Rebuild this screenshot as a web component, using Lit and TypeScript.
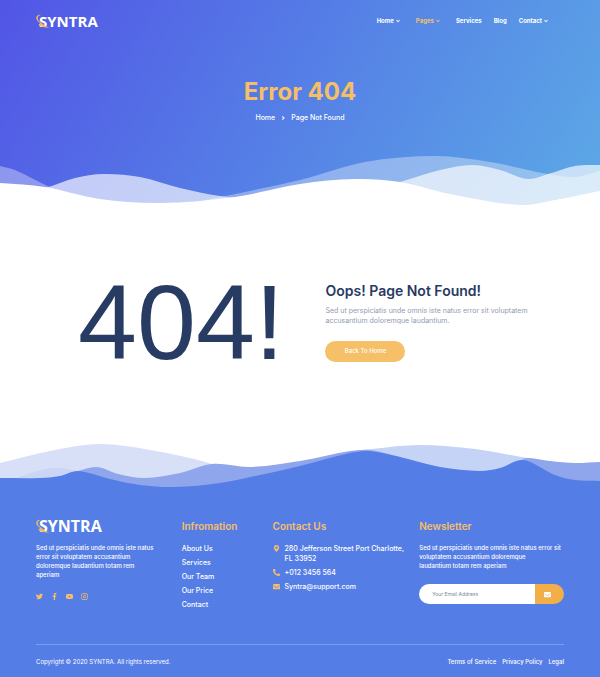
import { LitElement, html, css, svg, nothing } from "lit";
import { customElement, property } from "lit/decorators.js";

type Point = [number, number];

/** Smooth curve through the points, closed down to the given base line. */
function wave(points: Point[], base: number): string {
  let d = `M${points[0][0]},${base} L${points[0][0]},${points[0][1]}`;
  for (let i = 0; i < points.length - 1; i++) {
    const p0 = points[Math.max(0, i - 1)];
    const p1 = points[i];
    const p2 = points[i + 1];
    const p3 = points[Math.min(points.length - 1, i + 2)];
    const k1 = (p2[1] - p0[1]) / Math.max(1, p2[0] - p0[0]);
    const k2 = (p3[1] - p1[1]) / Math.max(1, p3[0] - p1[0]);
    const dx = (p2[0] - p1[0]) / 3;
    d += ` C${p1[0] + dx},${p1[1] + k1 * dx} ${p2[0] - dx},${p2[1] - k2 * dx} ${p2[0]},${p2[1]}`;
  }
  return `${d} L${points[points.length - 1][0]},${base} Z`;
}

const ICONS: Record<string, string> = {
  twitter:
    "M459 152c0 5 0 9 0 14 0 138-106 298-299 298-59 0-115-17-161-47 8 1 16 1 25 1 49 0 94-17 130-45-46-1-85-31-98-73 7 1 13 2 20 2 9 0 19-2 28-4-48-10-84-52-84-103v-1c14 8 30 13 47 13C39 188 20 156 20 120c0-19 5-37 14-53 52 64 129 105 216 110-2-8-3-16-3-24 0-58 47-105 105-105 30 0 57 13 77 33 24-5 46-13 66-25-8 24-24 45-46 58 21-2 42-8 60-16-14 21-31 39-50 54z",
  facebook:
    "M375 288l14-93h-89v-60c0-25 12-50 52-50h41V7s-37-7-72-7c-73 0-121 44-121 125v70h-81v93h81v224h100V288z",
  youtube:
    "M500 134c-6-24-24-42-47-48C412 75 256 75 256 75S100 75 59 86c-23 6-41 24-47 48C1 175 1 256 1 256s0 81 11 122c6 24 24 41 47 47 41 11 197 11 197 11s156 0 197-11c23-6 41-23 47-47 11-41 11-122 11-122s0-81-11-122zM205 330V182l130 74z",
  instagram:
    "M150 20h212c72 0 130 58 130 130v212c0 72-58 130-130 130H150C78 492 20 434 20 362V150C20 78 78 20 150 20zm0 46c-46 0-84 38-84 84v212c0 46 38 84 84 84h212c46 0 84-38 84-84V150c0-46-38-84-84-84zM256 135a121 121 0 1 1 0 242 121 121 0 0 1 0-242zm0 43a78 78 0 1 0 0 156 78 78 0 0 0 0-156zM382 102a28 28 0 1 1 0 56 28 28 0 0 1 0-56z",
  pin: "M236 502C91 291 64 270 64 192a192 192 0 1 1 384 0c0 78-27 99-172 310-10 13-30 13-40 0zM256 272a80 80 0 1 0 0-160 80 80 0 0 0 0 160z",
  phone:
    "M19 25L123 1c11-3 23 3 27 14l48 112c4 10 1 21-7 28l-61 50c36 77 99 140 177 177l50-61c7-8 18-11 28-7l112 48c11 4 17 16 14 27l-24 104c-3 11-12 19-24 19C207 512 0 305 0 49 0 37 8 28 19 25z",
  mail: "M502 191c4-3 10 0 10 5v204c0 27-21 48-48 48H48c-27 0-48-21-48-48V196c0-5 6-8 10-5 22 17 52 40 154 114 21 15 57 48 92 48 35 0 72-33 92-48 102-74 132-97 154-114zM256 320c23 0 57-29 73-41 133-97 143-105 174-129 6-5 9-12 9-19v-19c0-27-21-48-48-48H48c-27 0-48 21-48 48v19c0 7 3 14 9 19 31 24 41 32 174 129 16 12 50 41 73 41z",
  down: "M46 196l50-50 160 150 160-150 50 50-210 200z",
  right: "M156 86l60-56 210 226-210 226-60-56 160-170z",
};

@customElement("app-icon")
export class AppIcon extends LitElement {
  @property() name = "mail";

  static styles = css`
    :host {
      display: inline-flex;
      width: 7px;
      height: 7px;
      flex: none;
    }
    svg {
      width: 100%;
      height: 100%;
      fill: currentColor;
    }
  `;

  render() {
    return html`<svg viewBox="0 0 512 512" aria-hidden="true">
      ${svg`<path fill-rule="evenodd" d=${ICONS[this.name]} stroke="currentColor" stroke-width=${
        this.name === "down" || this.name === "right" ? 70 : 0
      }></path>`}
    </svg>`;
  }
}

@customElement("syntra-logo")
export class SyntraLogo extends LitElement {
  static styles = css`
    :host {
      display: block;
    }
    .logo {
      display: flex;
      align-items: center;
      color: #fff;
      text-decoration: none;
      font: 700 var(--logo-size, 15px) / 16px "Open Sans", sans-serif;
    }
    .mark {
      position: relative;
      z-index: 1;
      width: 14px;
      height: 14px;
      margin-right: -11px;
    }
  `;

  render() {
    return html`<a class="logo" href="#" aria-label="Syntra home">
      <svg class="mark" viewBox="0 0 14 14" aria-hidden="true">
        <path
          fill="#f5b95c"
          d="M5 .8C2.300 .3 0 1.800 .2 4.200 .5 6.500 2.500 7.900 4.300 9 3.700 9.600 2.800 10 2.500 10.500 4 13 9 13.600 14 13.600 11 12.700 9.200 12 7.800 10.700 6.300 9.200 2.600 7.600 1.900 5.200 1.300 3 2.800 1.400 5 .8z"
        ></path>
      </svg>
      <span>SYNTRA</span>
    </a>`;
  }
}

const HERO_BACK: Point[] = [[0, 21], [15, 25], [50, 42], [100, 60], [170, 62], [215, 53], [300, 35], [365, 17], [435, 11], [490, 17], [548, 29], [575, 32], [600, 26]];
const HERO_MIDDLE: Point[] = [[0, 50], [45, 43], [75, 33], [103, 29], [140, 32], [180, 43], [220, 51], [260, 54], [350, 50], [400, 37], [440, 25], [473, 20], [500, 25], [528, 34], [548, 29], [575, 21], [600, 20]];
const HERO_FRONT: Point[] = [[0, 38], [45, 42], [100, 54], [160, 58], [235, 52], [300, 39], [355, 34], [400, 37], [450, 49], [520, 60], [560, 54], [600, 46]];

const FOOT_LIGHT: Point[] = [[0, 28], [50, 16], [100, 9], [150, 15], [212, 29], [260, 50]];
const FOOT_BUMP: Point[] = [[10, 46], [30, 38], [55, 33], [78, 36], [110, 45]];
const FOOT_LEFT: Point[] = [[60, 42], [78, 36], [97, 32], [118, 39], [145, 43], [180, 38], [212, 29], [250, 32], [300, 26], [350, 16], [370, 15], [400, 22]];
const FOOT_PALE: Point[] = [[355, 17], [372, 14], [420, 10], [475, 14], [527, 23], [560, 28]];
const FOOT_RIGHT: Point[] = [[519, 26], [527, 23], [550, 26], [575, 28], [600, 27]];
const FOOT_FRONT: Point[] = [[0, 43], [40, 43], [60, 41], [78, 36], [110, 44], [140, 50], [175, 52], [220, 48], [260, 40], [300, 31], [350, 18], [369, 16], [400, 22], [440, 32], [480, 36], [500, 33], [523, 25], [555, 40], [575, 45], [600, 46]];

@customElement("app-root")
export class AppRoot extends LitElement {
  static styles = css`
    :host {
      display: block;
      font-family: Inter, sans-serif;
      color: #fff;
      background: #fff;
    }
    * {
      box-sizing: border-box;
    }
    h1,
    h2,
    h3,
    p,
    ul {
      margin: 0;
      padding: 0;
    }
    ul {
      list-style: none;
    }
    a {
      color: inherit;
      text-decoration: none;
    }
    .hero {
      background: linear-gradient(120deg, #5255e6 0%, #557de6 46%, #5caae6 100%);
    }
    .bar {
      display: flex;
      justify-content: space-between;
      align-items: center;
      padding: 13px 6% 0;
    }
    .menu {
      display: flex;
      gap: 12px;
      padding-right: 12px;
      font-size: 6px;
      line-height: 16px;
      font-weight: 700;
    }
    .menu a {
      display: flex;
      align-items: center;
      gap: 2px;
    }
    .menu app-icon {
      width: 4px;
      height: 4px;
    }
    .menu .parent {
      padding-right: 4px;
    }
    .menu .current {
      color: #f5bf68;
    }
    .title {
      text-align: center;
      padding-top: 47px;
    }
    .title h1 {
      font-size: 24px;
      line-height: 32px;
      font-weight: 700;
      color: #f5bf68;
    }
    .crumbs {
      display: flex;
      justify-content: center;
      align-items: center;
      gap: 6px;
      padding-top: 4px;
      font-size: 7px;
      line-height: 11px;
      font-weight: 500;
    }
    .crumbs app-icon {
      width: 4px;
      height: 4px;
    }
    .wave {
      display: block;
      width: 100%;
      height: 70px;
    }
    .hero .wave {
      margin-top: 22px;
    }
    .error {
      display: grid;
      grid-template-columns: minmax(0, 248fr) minmax(0, 239fr);
      align-items: center;
      padding: 47px 6% 53px 13%;
      color: #283b63;
    }
    .code {
      font-family: "Liberation Sans", sans-serif;
      font-size: 106px;
      line-height: 120px;
    }
    .message {
      padding-bottom: 2px;
    }
    .message h2 {
      font-size: 14px;
      line-height: 20px;
      font-weight: 600;
    }
    .message p {
      padding: 5px 0 15px;
      font-size: 7px;
      line-height: 10px;
      color: #919bb0;
    }
    .home {
      display: block;
      border: 0;
      border-radius: 11px;
      width: 80px;
      height: 21px;
      padding: 0;
      background: #f5c067;
      color: #fff;
      font: 500 6px/10px Inter, sans-serif;
    }
    .foot {
      background: #557de6;
    }
    .foot .wave {
      height: 60px;
      background: #fff;
    }
    .columns {
      display: grid;
      grid-template-columns: 146fr 91fr 147fr 145fr;
      padding: 23px 6% 34px;
    }
    .columns h3 {
      font-size: 10px;
      line-height: 16px;
      font-weight: 600;
      color: #f5bf68;
    }
    .columns syntra-logo {
      --logo-size: 16px;
    }
    .about p,
    .news p {
      padding-top: 9px;
      font-size: 6px;
      line-height: 9px;
      font-weight: 500;
    }
    .social {
      display: flex;
      gap: 8px;
      padding-top: 14px;
      color: #f5bf68;
    }
    .social a {
      display: flex;
    }
    .list {
      display: grid;
      gap: 4px;
      padding-top: 10px;
      font-size: 7px;
      line-height: 10px;
      font-weight: 500;
    }
    .contact li {
      display: flex;
      gap: 5px;
    }
    .contact app-icon {
      margin-top: 1px;
      color: #f5bf68;
    }
    .news form {
      display: flex;
      height: 20px;
      margin-top: 14px;
      border-radius: 10px;
      overflow: hidden;
    }
    .news input {
      flex: 1;
      min-width: 0;
      border: 0;
      padding: 0 13px;
      background: #fff;
      font: 5px/10px Inter, sans-serif;
      color: #5f6b85;
    }
    .news input::placeholder {
      color: #7d879b;
      opacity: 1;
    }
    .news button {
      display: flex;
      align-items: center;
      justify-content: center;
      width: 20%;
      padding: 0 5px 0 0;
      border: 0;
      background: #f2ae49;
      color: #fff;
    }
    .legal {
      display: flex;
      justify-content: space-between;
      margin: 0 6%;
      padding: 11px 0;
      border-top: 1px solid #7c9cef;
      font-size: 6px;
      line-height: 11px;
    }
    .legal nav {
      display: flex;
      gap: 6px;
      font-weight: 500;
    }
  `;

  private menuItem(label: string, parent = false, current = false) {
    return html`<a href="#" class="${parent ? "parent" : ""} ${current ? "current" : ""}"
      >${label}${parent ? html`<app-icon name="down"></app-icon>` : nothing}</a
    >`;
  }

  render() {
    return html`
      <header class="hero">
        <div class="bar">
          <syntra-logo></syntra-logo>
          <nav class="menu" aria-label="Main">
            ${this.menuItem("Home", true)} ${this.menuItem("Pages", true, true)}
            ${this.menuItem("Services")} ${this.menuItem("Blog")} ${this.menuItem("Contact", true)}
          </nav>
        </div>
        <div class="title">
          <h1>Error 404</h1>
          <nav class="crumbs" aria-label="Breadcrumb">
            <a href="#">Home</a><app-icon name="right"></app-icon><span>Page Not Found</span>
          </nav>
        </div>
        <svg class="wave" viewBox="0 0 600 70" preserveAspectRatio="none" aria-hidden="true">
          <path fill="#fff" fill-opacity="0.34" d=${wave(HERO_BACK, 71)}></path>
          <path fill="#fff" fill-opacity="0.66" d=${wave(HERO_MIDDLE, 71)}></path>
          <path fill="#fff" d=${wave(HERO_FRONT, 71)}></path>
        </svg>
      </header>

      <main class="error">
        <div class="code">404!</div>
        <div class="message">
          <h2>Oops! Page Not Found!</h2>
          <p>
            Sed ut perspiciatis unde omnis iste natus error sit voluptatem<br />accusantium
            doloremque laudantium.
          </p>
          <button class="home" type="button">Back To Home</button>
        </div>
      </main>

      <footer class="foot">
        <svg class="wave" viewBox="0 0 600 60" preserveAspectRatio="none" aria-hidden="true">
          <path fill="#d8e0f8" d=${wave(FOOT_LIGHT, 61)}></path>
          <path fill="#cbd5f5" d=${wave(FOOT_BUMP, 61)}></path>
          <path fill="#c5d3f6" d=${wave(FOOT_PALE, 61)}></path>
          <path fill="#8fa5ec" d=${wave(FOOT_LEFT, 61)}></path>
          <path fill="#8fa5ec" d=${wave(FOOT_RIGHT, 61)}></path>
          <path fill="#557de6" d=${wave(FOOT_FRONT, 61)}></path>
        </svg>
        <div class="columns">
          <section class="about">
            <syntra-logo></syntra-logo>
            <p>
              Sed ut perspiciatis unde omnis iste natus<br />error sit voluptatem accusantium<br />doloremque
              laudantium totam rem<br />aperiam
            </p>
            <div class="social">
              ${["twitter", "facebook", "youtube", "instagram"].map(
                (name) => html`<a href="#" aria-label=${name}><app-icon name=${name}></app-icon></a>`
              )}
            </div>
          </section>
          <section>
            <h3>Infromation</h3>
            <ul class="list">
              ${["About Us", "Services", "Our Team", "Our Price", "Contact"].map(
                (label) => html`<li><a href="#">${label}</a></li>`
              )}
            </ul>
          </section>
          <section>
            <h3>Contact Us</h3>
            <ul class="list contact">
              <li><app-icon name="pin"></app-icon><span>280 Jefferson Street Port Charlotte,<br />FL 33952</span></li>
              <li><app-icon name="phone"></app-icon><a href="#">+012 3456 564</a></li>
              <li><app-icon name="mail"></app-icon><a href="#">Syntra@support.com</a></li>
            </ul>
          </section>
          <section class="news">
            <h3>Newsletter</h3>
            <p>
              Sed ut perspiciatis unde omnis iste natus error sit<br />voluptatem accusantium
              doloremque<br />laudantium totam rem aperiam
            </p>
            <form>
              <input type="email" placeholder="Your Email Address" aria-label="Your Email Address" />
              <button type="button" aria-label="Subscribe"><app-icon name="mail"></app-icon></button>
            </form>
          </section>
        </div>
        <div class="legal">
          <span>Copyright © 2020 SYNTRA. All rights reserved.</span>
          <nav aria-label="Legal">
            <a href="#">Terms of Service</a><a href="#">Privacy Policy</a><a href="#">Legal</a>
          </nav>
        </div>
      </footer>
    `;
  }
}
